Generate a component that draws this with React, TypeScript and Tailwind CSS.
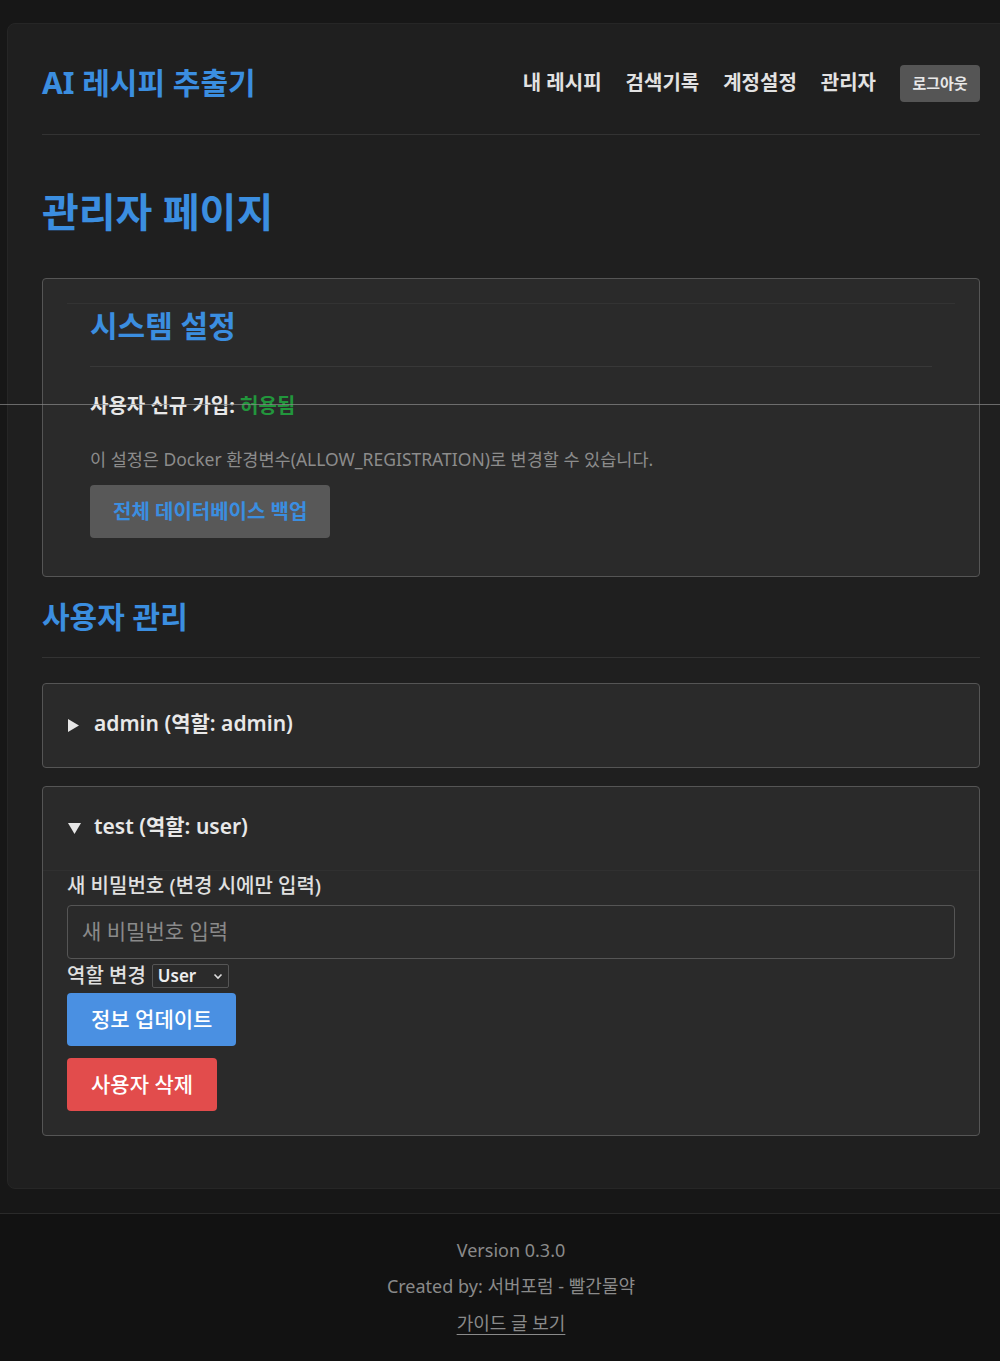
import React from 'react';

const font = { fontFamily: '"Noto Sans", "Noto Sans CJK KR", sans-serif' };

function Triangle({ open }: { open: boolean }) {
  return open ? (
    <svg width="13" height="12" viewBox="0 0 13 12" className="mr-[13px] mt-[4px]">
      <path d="M0 0 L13 0 L6.5 11 Z" fill="#e6e6e6" />
    </svg>
  ) : (
    <svg width="12" height="13" viewBox="0 0 12 13" className="mr-[14px] mt-[2px]">
      <path d="M0 0 L11 6.5 L0 13 Z" fill="#e6e6e6" />
    </svg>
  );
}

function UserCard({ name, role, open }: { name: string; role: string; open: boolean }) {
  return (
    <div className="rounded-[4px] border border-[#555] bg-[#2a2a2a]">
      <div className="flex h-[83px] items-center pl-[25px] pb-[3px] text-[21px] font-semibold text-[#e8e8e8]">
        <Triangle open={open} />
        <span>
          {name} (역할: {role})
        </span>
      </div>
      {open && (
        <div className="border-t border-[#303030] px-[24px] pb-[24px] pt-[2px]">
          <div className="text-[20px] font-medium leading-[26px] text-[#e0e0e0]">새 비밀번호 (변경 시에만 입력)</div>
          <div className="mt-[6px] flex h-[54px] items-center rounded-[4px] border border-[#555] bg-[#2a2a2a] px-[14px] text-[21px] text-[#8a8a8a]">
            새 비밀번호 입력
          </div>
          <div className="mt-[5px] flex h-[24px] items-center">
            <span className="text-[20px] font-medium leading-[24px] text-[#e0e0e0]">역할 변경</span>
            <span className="ml-[6px] flex h-[24px] w-[77px] items-center justify-between rounded-[2px] border border-[#555] bg-[#2b2b2b] pl-[5px] pr-[4px] text-[17px] font-semibold text-[#eee]">
              User
              <svg width="12" height="12" viewBox="0 0 12 12">
                <path d="M2.5 4.5 L6 8 L9.5 4.5" stroke="#ddd" strokeWidth="1.6" fill="none" />
              </svg>
            </span>
          </div>
          <div className="mt-[5px] flex flex-col items-start gap-[12px]">
            <button className="h-[53px] rounded-[4px] bg-[#4a90e2] px-[24px] text-[21px] font-medium text-white">정보 업데이트</button>
            <button className="h-[53px] rounded-[4px] bg-[#e24c4c] px-[24px] text-[21px] font-medium text-white">사용자 삭제</button>
          </div>
        </div>
      )}
    </div>
  );
}

export default function App() {
  return (
    <div className="relative min-h-[1361px] overflow-x-hidden bg-[#121212]" style={font}>
      <div className="w-[1022px] bg-[#171717] pb-[24px] pt-[23px]">
        <div className="ml-[7px] w-[1008px] rounded-[8px] border border-[#262626] bg-[#1f1f1f] px-[34px] pb-[52px] pt-[34px]">
          {/* Header */}
          <header className="flex h-[77px] items-start border-b border-[#333]">
            <div className="flex h-[48px] flex-1 items-center">
              <h1 className="text-[30px] font-bold text-[#3b8ee0]">AI 레시피 추출기</h1>
            </div>
            <nav className="flex h-[48px] items-center gap-[24px] pt-[2px] text-[20px] font-bold text-[#e2e2e2]">
              <span>내 레시피</span>
              <span>검색기록</span>
              <span>계정설정</span>
              <span>관리자</span>
              <span className="flex h-[37px] w-[80px] items-center justify-center rounded-[4px] bg-[#555] text-[15px] font-bold text-[#e8e8e8]">
                로그아웃
              </span>
            </nav>
          </header>

          <h2 className="mt-[55px] text-[40px] font-bold leading-[44px] text-[#3b8ee0]">관리자 페이지</h2>

          {/* System settings */}
          <section className="mt-[44px] rounded-[4px] border border-[#555] bg-[#2a2a2a] p-[24px]">
            <div className="border-t border-[#333] px-[23px] pb-[14px]">
              <h3 className="mt-[4px] border-b border-[#383838] pb-[22px] text-[30px] font-bold leading-[36px] text-[#3b8ee0]">시스템 설정</h3>
              <p className="mt-[25px] text-[20px] font-bold leading-[27px] text-[#e8e8e8]">
                사용자 신규 가입: <span className="text-[#22963c]">허용됨</span>
              </p>
              <p className="mt-[28px] text-[17.5px] leading-[25px] text-[#8c8c8c]">
                이 설정은 Docker 환경변수(ALLOW_REGISTRATION)로 변경할 수 있습니다.
              </p>
              <button className="mt-[13px] h-[53px] rounded-[4px] bg-[#585858] px-[23px] text-[20px] font-bold text-[#3b8ee0]">
                전체 데이터베이스 백업
              </button>
            </div>
          </section>

          {/* Users */}
          <h3 className="mt-[22px] border-b border-[#333] pb-[22px] text-[30px] font-bold leading-[36px] text-[#3b8ee0]">사용자 관리</h3>
          <div className="mt-[25px] flex flex-col gap-[18px]">
            <UserCard name="admin" role="admin" open={false} />
            <UserCard name="test" role="user" open={true} />
          </div>
        </div>
      </div>

      {/* Footer */}
      <footer className="w-[1022px] border-t border-[#2a2a2a] pt-[24px] text-center text-[18px] leading-[24px] text-[#8a8a8a]">
        <p>Version 0.3.0</p>
        <p className="mt-[12px]">Created by: 서버포럼 - 빨간물약</p>
        <p className="mt-[13px]">
          <span className="underline underline-offset-[4px]">가이드 글 보기</span>
        </p>
      </footer>

      {/* stray full-width rule across the page */}
      <div className="absolute left-0 right-0 top-[404px] h-px bg-[#8a8a8a]/70" />
    </div>
  );
}
